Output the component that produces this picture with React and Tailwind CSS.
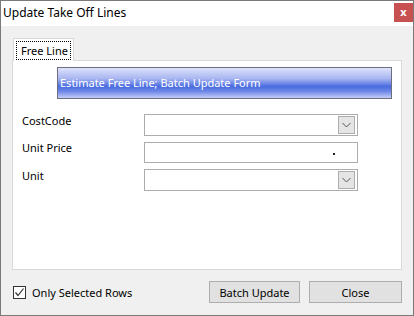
export default function App() {
  const font = { fontFamily: '"Noto Sans", "Open Sans", sans-serif' };
  const Chevron = () => (
    <svg width="9" height="6" viewBox="0 0 9 6"><path d="M0.5 1 L4.5 5 L8.5 1" fill="none" stroke="#555" strokeWidth="1" /></svg>
  );
  return (
    <div className="w-[414px] h-[316px] border border-[#7a7a7a] bg-[#f0f0f0] flex flex-col text-[11px] text-black overflow-hidden whitespace-nowrap" style={font}>
      <div className="h-[25px] bg-white flex items-start justify-between shrink-0">
        <div className="pl-[2px] pt-[4px] leading-[16px] text-[12px]">Update Take Off Lines</div>
        <div className="w-[19px] h-[19px] mt-[2px] bg-[#c75050] text-white flex items-center justify-center text-[11px] font-bold leading-none pb-[2px]">x</div>
      </div>
      <div className="flex flex-col px-[11px] pt-[12px]">
        <div className="flex">
          <div className="ml-[1px] w-[61px] h-[23px] border border-b-0 border-[#d9d9d9] bg-white px-[2px] pt-[2px] relative z-10 -mb-[1px]">
            <div className="h-[19px] border border-dotted border-black flex items-center pl-[4px] leading-none">Free Line</div>
          </div>
        </div>
        <div className="h-[210px] border border-[#d9d9d9] bg-white flex flex-col">
          <div className="ml-[44px] mr-[9px] mt-[6px] h-[32px] border border-[#6e6e7e] flex items-center pl-[2px] text-white bg-[linear-gradient(to_bottom,#dde2fb_0%,#a9b6f1_35%,#4a6be0_62%,#6f88e8_78%,#c3cdf8_100%)]">
            Estimate Free Line; Batch Update Form
          </div>
          <div className="flex flex-col mt-[15px] gap-[6px]">
            <div className="flex items-start h-[22px]">
              <div className="w-[131px] pl-[9px] leading-[16px] -mt-[1px]">CostCode</div>
              <div className="w-[214px] h-[22px] border border-[#acacac] flex items-center justify-end pr-[2px]">
                <div className="w-[17px] h-[18px] border border-[#adadad] bg-[#e5e5e5] flex items-center justify-center"><Chevron /></div>
              </div>
            </div>
            <div className="flex items-start h-[21px]">
              <div className="w-[131px] pl-[9px] leading-[16px] -mt-[2px]">Unit Price</div>
              <div className="w-[214px] h-[21px] border border-[#acacac] relative">
                <div className="absolute left-[188px] top-[10px] w-[2px] h-[2px] bg-[#222]" />
              </div>
            </div>
            <div className="flex items-start h-[22px]">
              <div className="w-[131px] pl-[9px] leading-[16px] -mt-[1px]">Unit</div>
              <div className="w-[214px] h-[22px] border border-[#acacac] flex items-center justify-end pr-[2px]">
                <div className="w-[17px] h-[18px] border border-[#adadad] bg-[#e5e5e5] flex items-center justify-center"><Chevron /></div>
              </div>
            </div>
          </div>
        </div>
        <div className="flex items-center mt-[11px]">
          <div className="w-[13px] h-[13px] border border-[#333] bg-white flex items-center justify-center ml-[1px]">
            <svg width="11" height="11" viewBox="0 0 11 11"><path d="M1.5 5.5 L4 8.5 L9.5 1.5" fill="none" stroke="#333" strokeWidth="1.2" /></svg>
          </div>
          <div className="ml-[6px] leading-[16px] mt-[1px]">Only Selected Rows</div>
          <div className="ml-auto flex gap-[9px]">
            <div className="w-[91px] h-[22px] border border-[#adadad] bg-[#e1e1e1] flex items-center justify-center leading-none">Batch Update</div>
            <div className="w-[93px] h-[22px] border border-[#adadad] bg-[#e1e1e1] flex items-center justify-center leading-none">Close</div>
          </div>
        </div>
      </div>
    </div>
  );
}
